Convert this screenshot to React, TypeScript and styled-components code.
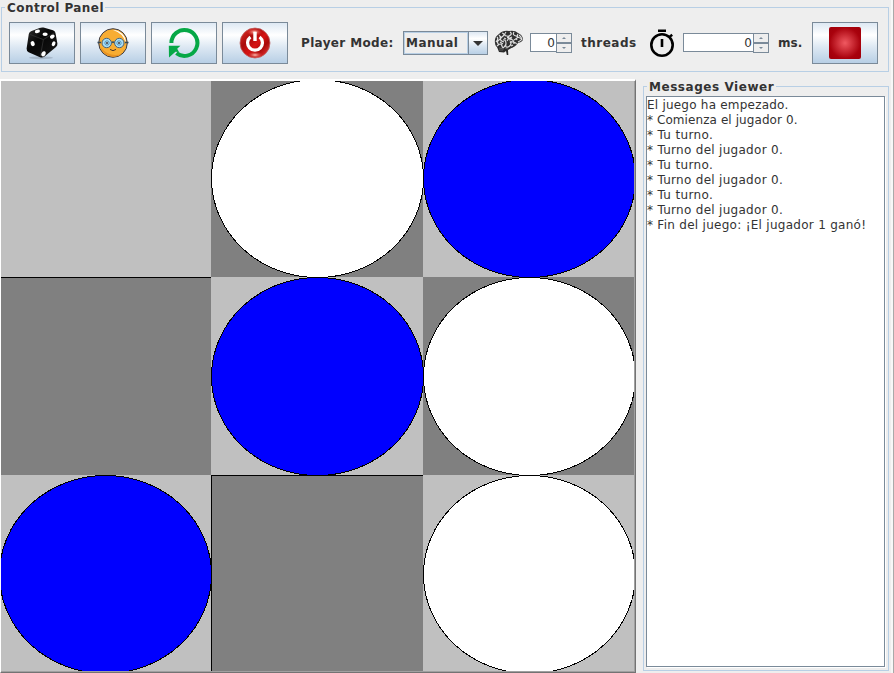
import React from "react";
import styled, { createGlobalStyle } from "styled-components";

const Global = createGlobalStyle`
  *, *::before, *::after { box-sizing: border-box; }
  body { margin: 0; background: #eeeeee; overflow: hidden; }
`;

const Window = styled.div`
  width: 894px;
  height: 673px;
  display: flex;
  flex-direction: column;
  background: #eeeeee;
  border-right: 1px solid #a9a9a9;
  box-shadow: inset -2px 0 0 #f7f7f7;
  font: 12px/15px "DejaVu Sans", sans-serif;
  color: #333333;
  overflow: hidden;
`;

const ControlPanel = styled.section`
  width: 888px;
  height: 65px;
  margin: 7px 0 7px 1px;
  border: 1px solid #b8cfe5;
  flex: none;
`;

const Title = styled.h2<{ $width: number; $spacing: number }>`
  width: ${(p) => p.$width}px;
  height: 15px;
  margin: -7px 0 0 3px;
  padding-left: 2px;
  background: #eeeeee;
  font: bold 12px/15px "DejaVu Sans", sans-serif;
  letter-spacing: ${(p) => p.$spacing}px;
  white-space: nowrap;
`;

const Toolbar = styled.div`
  display: flex;
  align-items: center;
  height: 42px;
  margin-top: 6px;
  padding-left: 7px;
`;

const ToolButton = styled.button`
  width: 66px;
  height: 42px;
  margin: 0 5px 0 0;
  padding: 0;
  flex: none;
  display: flex;
  align-items: center;
  justify-content: center;
  border: 1px solid #7a8a99;
  background: linear-gradient(#dde8f3 0%, #ffffff 30%, #dde8f3 60%, #b8cfe5 100%);
`;

const Label = styled.span<{ $width: number; $left: number; $spacing: number }>`
  width: ${(p) => p.$width}px;
  margin-left: ${(p) => p.$left}px;
  flex: none;
  font-weight: bold;
  letter-spacing: ${(p) => p.$spacing}px;
  white-space: nowrap;
`;

const Combo = styled.div`
  display: flex;
  width: 85px;
  height: 24px;
  flex: none;
  border: 1px solid #7a8a99;
`;

const ComboValue = styled.div`
  width: 64px;
  padding-left: 1px;
  border: 1px solid #b8cfe5;
  font-weight: bold;
  line-height: 20px;
  letter-spacing: 0.5px;
`;

const ComboArrow = styled.div`
  flex: 1;
  display: flex;
  align-items: center;
  justify-content: center;
  border-left: 1px solid #7a8a99;
  background: linear-gradient(#dde8f3 0%, #ffffff 30%, #dde8f3 60%, #b8cfe5 100%);
`;

const IconSlot = styled.div<{ $left: number; $width: number }>`
  display: flex;
  flex: none;
  width: ${(p) => p.$width}px;
  margin-left: ${(p) => p.$left}px;
`;

const Spinner = styled.div<{ $width: number; $left: number }>`
  display: flex;
  flex: none;
  width: ${(p) => p.$width}px;
  height: 20px;
  margin-left: ${(p) => p.$left}px;
`;

const SpinnerValue = styled.div`
  flex: 1;
  height: 19px;
  padding-right: 1px;
  border: 1px solid #7a8a99;
  border-right: 0;
  background: #ffffff;
  line-height: 19px;
  text-align: right;
`;

const SpinnerArrows = styled.div`
  width: 16px;
  display: grid;
  grid-template-rows: 10px 10px;
`;

const SpinnerArrow = styled.div`
  display: flex;
  align-items: center;
  justify-content: center;
  border: 1px solid #7a8a99;
  background: #eeeeee;
`;

const Main = styled.main`
  display: flex;
  flex: 1;
  min-height: 0;
`;

const BoardFrame = styled.div`
  width: 636px;
  height: 594px;
  flex: none;
  display: flex;
  border-style: solid;
  border-width: 2px 1px 1px 1px;
  border-color: #ffffff #737373 #737373 #ffffff;
  overflow: hidden;
`;

const BoardInset = styled.div`
  width: 634px;
  height: 591px;
  border: solid #a0a0a0;
  border-width: 0 1px 1px 0;
  overflow: hidden;
`;

const Grid = styled.div`
  display: grid;
  grid-template-columns: repeat(3, 212px);
  grid-template-rows: repeat(3, 198px);
  width: 636px;
  margin: -2px 0 0 -2px;
`;

const Cell = styled.div<{ $dark: boolean; $top: boolean; $left: boolean }>`
  background: ${(p) => (p.$dark ? "#808080" : "#c0c0c0")};
  border: 0 solid #000000;
  border-top-width: ${(p) => (p.$top ? 1 : 0)}px;
  border-left-width: ${(p) => (p.$left ? 1 : 0)}px;
`;

const DiscSvg = styled.svg`
  display: block;
  overflow: visible;
`;

const Messages = styled.section`
  width: 246px;
  height: 585px;
  margin: 7px 0 0 7px;
  border: 1px solid #b8cfe5;
`;

const MessageArea = styled.div`
  width: 239px;
  height: 571px;
  margin: 1px 0 0 2px;
  padding-top: 1px;
  border: 1px solid #7a8a99;
  background: #ffffff;
  box-shadow: 1px 1px 0 #ffffff;
`;

const Message = styled.div<{ $spacing: number }>`
  height: 15px;
  letter-spacing: ${(p) => p.$spacing}px;
  white-space: pre;
`;

const DieIcon = () => (
  <svg width="34" height="34" viewBox="0 0 34 34">
    <defs>
      <linearGradient id="die" x1="0" y1="0" x2="1" y2="1">
        <stop offset="0" stopColor="#333333" />
        <stop offset="0.4" stopColor="#070707" />
        <stop offset="1" stopColor="#161616" />
      </linearGradient>
    </defs>
    <ellipse cx="16" cy="31.8" rx="12" ry="1.4" fill="#8b9aaa" opacity="0.5" />
    <path d="M3.8 8Q4 6.2 6 5.3L14.5 2Q16.5 1.2 18.5 1.6L28 4.2Q30 4.8 30.4 6.8L32.4 17.5Q32.6 19.5 31 21L19.6 30.6Q17.5 32.2 15 31.2L3.6 26.2Q1.4 25 1.6 22.6Z" fill="url(#die)" />
    <path d="M5 8.4L18.4 13.6L29.6 6.6M18.4 13.6L15.4 30" stroke="#343434" strokeWidth="0.8" fill="none" />
    <g fill="#fff">
      <ellipse cx="12.4" cy="5.4" rx="2.6" ry="1.7" transform="rotate(-12 12.4 5.4)" />
      <ellipse cx="20.1" cy="8.3" rx="2.6" ry="1.7" />
      <ellipse cx="27.3" cy="10.6" rx="2.5" ry="1.8" transform="rotate(-30 27.3 10.6)" />
      <ellipse cx="7.7" cy="17.6" rx="2" ry="2.6" transform="rotate(-20 7.7 17.6)" />
      <ellipse cx="28.6" cy="17.8" rx="1.7" ry="2.5" transform="rotate(25 28.6 17.8)" />
      <ellipse cx="18.5" cy="27.8" rx="2" ry="2.7" transform="rotate(25 18.5 27.8)" />
    </g>
  </svg>
);

const NerdIcon = () => (
  <svg width="32" height="32" viewBox="0 0 32 32">
    <circle cx="16" cy="16" r="14.3" fill="#f8ad32" stroke="#3b3c48" strokeWidth="1" />
    <path d="M16 3A13 13 0 0 1 29 16Q26 6 16 3Z" fill="#fff" />
    <path d="M3.3 20A14 14 0 0 0 25 27Q12 31 3.3 20Z" fill="#e99322" />
    <path d="M0.5 15.6H4M14.5 15.6Q16 14.5 17.5 15.6M28 15.6H31.5" stroke="#344a5b" strokeWidth="1.5" fill="none" />
    <circle cx="9.7" cy="16" r="4.7" fill="#a9dcf4" stroke="#496477" />
    <circle cx="22.3" cy="16" r="4.7" fill="#a9dcf4" stroke="#496477" />
    <circle cx="10" cy="16" r="2.1" fill="#fff" stroke="#398dbc" />
    <circle cx="22" cy="16" r="2.1" fill="#fff" stroke="#398dbc" />
    <circle cx="10" cy="16" r="1" fill="#24303e" />
    <circle cx="22" cy="16" r="1" fill="#24303e" />
    <path d="M13 22.4Q16 25 19 22.4" stroke="#4b3829" fill="none" />
  </svg>
);

const RestartIcon = () => (
  <svg width="32" height="32" viewBox="0 0 32 32">
    <path d="M3.4 16A13 13 0 1 1 8.4 26.2" fill="none" stroke="#06a846" strokeWidth="4" />
    <path d="M0.8 18.7H12.4L9.2 21.8L11 25L7.5 24.8L1 30.5Z" fill="#06a846" />
  </svg>
);

const PowerIcon = () => (
  <svg width="32" height="32" viewBox="0 0 32 32">
    <defs>
      <linearGradient id="power" x1="0.1" y1="0.1" x2="0.9" y2="0.9">
        <stop offset="0" stopColor="#d52822" />
        <stop offset="0.3" stopColor="#a90c0c" />
        <stop offset="0.55" stopColor="#d71414" />
        <stop offset="0.75" stopColor="#a90808" />
        <stop offset="1" stopColor="#e13030" />
      </linearGradient>
      <radialGradient id="shine">
        <stop offset="0" stopColor="#ffc0b5" />
        <stop offset="1" stopColor="#e92a26" stopOpacity="0" />
      </radialGradient>
    </defs>
    <circle cx="16" cy="16" r="15" fill="url(#power)" stroke="#bd6464" strokeWidth="0.8" />
    <ellipse cx="15.5" cy="5" rx="8" ry="4" fill="url(#shine)" />
    <ellipse cx="16" cy="28" rx="8" ry="3.6" fill="url(#shine)" />
    <path d="M11.4 10A7.4 7.4 0 1 0 20.6 10" fill="none" stroke="#fff" strokeWidth="3.2" />
    <path d="M16 4.8V14" stroke="#fff" strokeWidth="3.4" />
  </svg>
);

const BrainIcon = () => (
  <svg width="30" height="26" viewBox="0 0 30 26">
    <path d="M3 17L5 22L10 22.5L12 21L12.8 25H14.3L14 20L19 17Z" fill="#292929" />
    <path d="M1 13Q0 7 5 4Q9 0 15 1Q21 0 24 3Q29 5 29 10Q27 13 24 13Q20 19 14 18L7 18Q1 18 1 13Z" fill="#303030" />
    <g fill="none" stroke="#dedede" strokeWidth="1.2">
      <path d="M2 12Q5 9 3 7M5 5Q8 8 5 10T5 15M8 3Q12 4 8 7T10 12M12 2Q9 6 13 6T13 11M16 2Q19 4 15 6T18 9M20 2Q18 5 22 6T20 10M24 4Q22 7 26 8T24 12" />
      <path d="M3 16Q7 12 8 16T12 14Q11 18 14 17T17 13Q15 11 19 12T22 14M9 10Q12 9 12 14M15 10Q20 8 20 14M25 5L27 7L28 10M6 12L9 14" />
      <path d="M6 8L7 6M10 8L12 9M16 8L18 7M22 8L23 10M17 16L19 15" />
    </g>
    <path d="M5 18L10 19M5 20H9M11 18L14 19" stroke="#777" strokeWidth="0.7" />
  </svg>
);

const StopwatchIcon = () => (
  <svg width="26" height="30" viewBox="0 0 26 30">
    <circle cx="13" cy="17" r="10.7" fill="none" stroke="#000" strokeWidth="2.6" />
    <path d="M9 2.7H17M13 11V19" stroke="#000" strokeWidth="2.6" />
    <path d="M20 9.4L23.2 6.8" stroke="#000" strokeWidth="2.5" />
  </svg>
);

const StopIcon = () => (
  <svg width="32" height="32" viewBox="0 0 32 32">
    <defs>
      <radialGradient id="stop" r="0.6">
        <stop offset="0" stopColor="#f05961" />
        <stop offset="0.8" stopColor="#a9020d" />
        <stop offset="1" stopColor="#a3000b" />
      </radialGradient>
    </defs>
    <rect width="32" height="32" rx="2" fill="url(#stop)" />
  </svg>
);

const Disc = ({ color }: { color: string }) => (
  <DiscSvg width="212" height="198" shapeRendering="crispEdges">
    <ellipse cx="106.5" cy="99.5" rx="106" ry="99" fill={color} stroke="#000" />
  </DiscSvg>
);

const Stepper = ({ value, width, left }: { value: number; width: number; left: number }) => (
  <Spinner $width={width} $left={left}>
    <SpinnerValue>{value}</SpinnerValue>
    <SpinnerArrows>
      <SpinnerArrow><svg width="4" height="2"><path d="M0 2L2 0L4 2Z" fill="#7a8a99" /></svg></SpinnerArrow>
      <SpinnerArrow><svg width="4" height="2"><path d="M0 0L2 2L4 0Z" fill="#7a8a99" /></svg></SpinnerArrow>
    </SpinnerArrows>
  </Spinner>
);

const WHITE = "#ffffff";
const BLUE = "#0000ff";
const pieces: (string | null)[] = [null, WHITE, BLUE, null, BLUE, WHITE, BLUE, null, WHITE];

const messages: [string, number][] = [
  ["El juego ha empezado.", 0.22],
  ["* Comienza el jugador 0.", 0.08],
  ["* Tu turno.", 0.35],
  ["* Turno del jugador 0.", 0.29],
  ["* Tu turno.", 0.35],
  ["* Turno del jugador 0.", 0.29],
  ["* Tu turno.", 0.35],
  ["* Turno del jugador 0.", 0.29],
  ["* Fin del juego: ¡El jugador 1 ganó!", 0.28],
];

export default function App() {
  return (
    <>
      <Global />
      <Window>
        <ControlPanel>
          <Title $width={100} $spacing={0.45}>Control Panel</Title>
          <Toolbar>
            <ToolButton><DieIcon /></ToolButton>
            <ToolButton><NerdIcon /></ToolButton>
            <ToolButton><RestartIcon /></ToolButton>
            <ToolButton><PowerIcon /></ToolButton>
            <Label $left={8} $width={102} $spacing={0.35}>Player Mode:</Label>
            <Combo>
              <ComboValue>Manual</ComboValue>
              <ComboArrow><svg width="10" height="5"><path d="M0 0H10L5 5Z" fill="#333" /></svg></ComboArrow>
            </Combo>
            <IconSlot $left={6} $width={30}><BrainIcon /></IconSlot>
            <Stepper value={0} width={42} left={6} />
            <Label $left={9} $width={56} $spacing={0.5}>threads</Label>
            <IconSlot $left={12} $width={26}><StopwatchIcon /></IconSlot>
            <Stepper value={0} width={86} left={8} />
            <Label $left={9} $width={34} $spacing={0.1}>ms.</Label>
            <ToolButton><StopIcon /></ToolButton>
          </Toolbar>
        </ControlPanel>
        <Main>
          <BoardFrame>
            <BoardInset>
              <Grid>
                {pieces.map((piece, i) => (
                  <Cell key={i} $dark={i % 2 === 1} $top={i === 3 || i === 7} $left={i === 7}>
                    {piece && <Disc color={piece} />}
                  </Cell>
                ))}
              </Grid>
            </BoardInset>
          </BoardFrame>
          <Messages>
            <Title $width={129} $spacing={0.55}>Messages Viewer</Title>
            <MessageArea>
              {messages.map(([text, spacing], i) => (
                <Message key={i} $spacing={spacing}>{text}</Message>
              ))}
            </MessageArea>
          </Messages>
        </Main>
      </Window>
    </>
  );
}
